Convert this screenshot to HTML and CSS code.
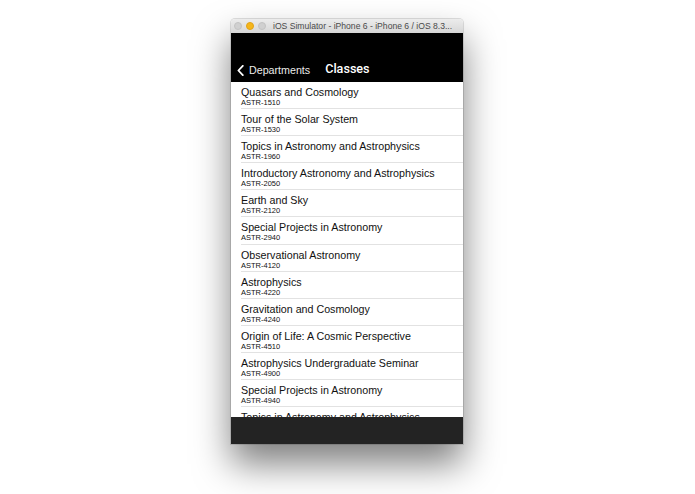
FILE: index.html
```html
<!DOCTYPE html>
<html>
<head>
<meta charset="utf-8">
<link rel="stylesheet" href="styles.css">
</head>
<body>
<div class="window">
  <div class="titlebar">
    <div class="lights">
      <span class="light gray"></span>
      <span class="light yellow"></span>
      <span class="light gray"></span>
    </div>
    <div class="wtitle">iOS Simulator - iPhone 6 - iPhone 6 / iOS 8.3...</div>
  </div>
  <div class="screen">
    <div class="navbar">
      <div class="back">
        <svg class="chev" width="7" height="11" viewBox="0 0 7 11"><path d="M5.8 0.8 L1.4 5.5 L5.8 10.2" fill="none" stroke="#fff" stroke-width="1.8" stroke-linecap="round" stroke-linejoin="round"/></svg>
        <span>Departments</span>
      </div>
      <div class="navtitle">Classes</div>
    </div>
    <div class="list">
      <div class="row"><div class="t">Quasars and Cosmology</div><div class="s">ASTR-1510</div></div>
      <div class="row"><div class="t">Tour of the Solar System</div><div class="s">ASTR-1530</div></div>
      <div class="row"><div class="t">Topics in Astronomy and Astrophysics</div><div class="s">ASTR-1960</div></div>
      <div class="row"><div class="t">Introductory Astronomy and Astrophysics</div><div class="s">ASTR-2050</div></div>
      <div class="row"><div class="t">Earth and Sky</div><div class="s">ASTR-2120</div></div>
      <div class="row"><div class="t">Special Projects in Astronomy</div><div class="s">ASTR-2940</div></div>
      <div class="row"><div class="t">Observational Astronomy</div><div class="s">ASTR-4120</div></div>
      <div class="row"><div class="t">Astrophysics</div><div class="s">ASTR-4220</div></div>
      <div class="row"><div class="t">Gravitation and Cosmology</div><div class="s">ASTR-4240</div></div>
      <div class="row"><div class="t">Origin of Life: A Cosmic Perspective</div><div class="s">ASTR-4510</div></div>
      <div class="row"><div class="t">Astrophysics Undergraduate Seminar</div><div class="s">ASTR-4900</div></div>
      <div class="row"><div class="t">Special Projects in Astronomy</div><div class="s">ASTR-4940</div></div>
      <div class="row"><div class="t">Topics in Astronomy and Astrophysics</div><div class="s">ASTR-4960</div></div>
    </div>
    <div class="bottombar"></div>
  </div>
</div>
</body>
</html>
```

FILE: styles.css
```css
html, body {
  margin: 0;
  padding: 0;
  background: #ffffff;
}
html {
  height: 100%;
}
body {
  font-family: "Liberation Sans", Arial, sans-serif;
  padding-top: 19px;
  padding-left: 231px;
  min-height: 100%;
  box-sizing: border-box;
}
.window {
  width: 232px;
  height: 425px;
  display: flex;
  flex-direction: column;
  box-shadow: 0 20px 36px rgba(0,0,0,0.5), 0 0 0 1px rgba(0,0,0,0.12);
  border-radius: 4px 4px 0 0;
  overflow: hidden;
}
.titlebar {
  height: 14px;
  flex: none;
  display: flex;
  align-items: center;
  background: linear-gradient(#ececec, #d6d6d6);
}
.lights {
  display: flex;
  gap: 4px;
  padding-left: 3px;
}
.light {
  width: 8px;
  height: 8px;
  border-radius: 50%;
  box-sizing: border-box;
}
.light.gray {
  background: #d0d0d0;
  border: 1px solid #c2c2c2;
}
.light.yellow {
  background: #f6b61a;
  border: 1px solid #e0a117;
}
.wtitle {
  margin-left: 7px;
  font-size: 8.6px;
  color: #4a4a4a;
  white-space: nowrap;
}
.screen {
  flex: 1;
  display: flex;
  flex-direction: column;
  min-height: 0;
}
.navbar {
  height: 49px;
  flex: none;
  background: #000;
  color: #fff;
  display: flex;
  align-items: flex-end;
  padding-bottom: 6px;
  box-sizing: border-box;
}
.back {
  display: flex;
  align-items: center;
  gap: 5px;
  padding-left: 6px;
  font-size: 10.7px;
  color: #eaeaea;
}
.chev {
  display: block;
}
.navtitle {
  margin-left: 15px;
  font-family: Roboto, "Liberation Sans", sans-serif;
  font-size: 12.6px;
  font-weight: 500;
}
.list {
  flex: 1;
  min-height: 0;
  overflow: hidden;
  background: #fff;
}
.row {
  height: 27.1px;
  box-sizing: border-box;
  margin-left: 10px;
  padding-top: 4px;
  border-bottom: 1px solid #e2e2e2;
  color: #111;
}
.t {
  font-size: 10.7px;
  line-height: 12px;
  white-space: nowrap;
}
.s {
  font-size: 7.5px;
  line-height: 9px;
  white-space: nowrap;
}
.bottombar {
  height: 27px;
  flex: none;
  background: #232323;
}
```
